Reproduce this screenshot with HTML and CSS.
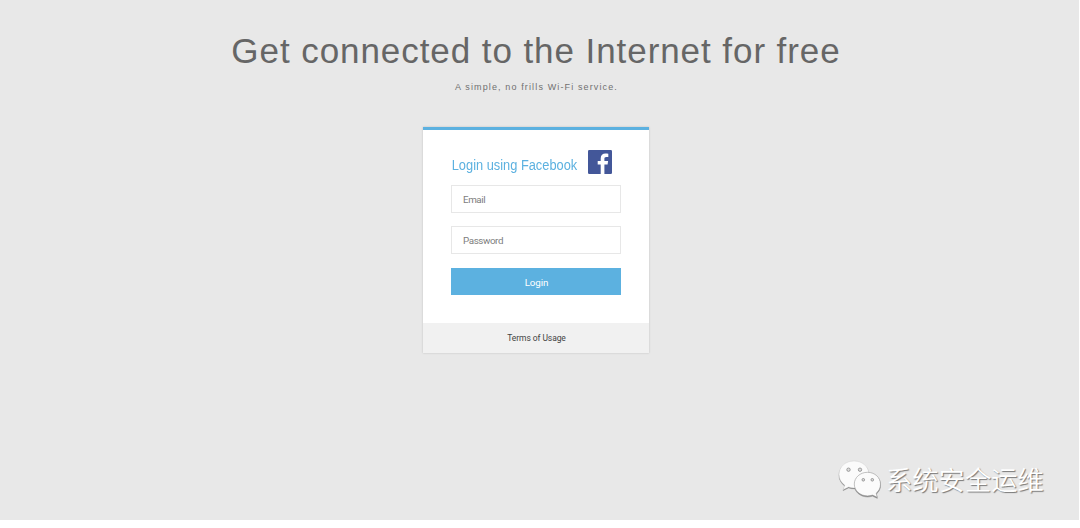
FILE: index.html
```html
<!DOCTYPE html>
<html lang="en">
<head>
<meta charset="utf-8">
<title>Get connected</title>
<link rel="stylesheet" href="styles.css">
</head>
<body>
<main class="page">
  <h1 class="title">Get connected to the Internet for free</h1>
  <p class="subtitle">A simple, no frills Wi-Fi service.</p>
  <section class="card">
    <form class="form">
      <div class="heading">
        <h2 class="heading-text">Login using Facebook</h2>
        <svg class="fb" viewBox="0 0 24 24" aria-hidden="true">
          <rect width="24" height="24" rx="1.2" fill="#435799"/>
          <path d="M12.700 24V14.600H9.700V11H12.700V8.400C12.700 5.200 14.600 3.500 17.500 3.500C18.800 3.500 19.900 3.600 20.300 3.700V7H18.300C16.800 7 16.400 7.700 16.400 8.800V11H20.100L19.600 14.600H16.400V24Z" fill="#fff"/>
        </svg>
      </div>
      <input class="field" type="text" placeholder="Email">
      <input class="field" type="password" placeholder="Password">
      <button class="submit" type="button">Login</button>
    </form>
    <footer class="terms">Terms of Usage</footer>
  </section>
  <div class="watermark">
    <svg class="wechat" viewBox="0 0 44 40" aria-hidden="true">
      <path d="M16 1C7.500 1 1 6.800 1 14.500C1 19 3.200 22.700 6.800 25.200L5 29.800L10.600 27C12.300 27.600 14 27.900 16 27.900C24.500 27.900 31 22 31 14.500C31 6.800 24.500 1 16 1Z" fill="#fbfbfb" stroke="#bbb" stroke-width=".3"/>
      <path d="M29.500 12.300C22.200 12.300 16.300 17.500 16.300 24.100C16.300 30.700 22.200 35.900 29.500 35.900C31.300 35.900 33 35.600 34.500 35.100L39.300 37.300L38.200 33.200C40.900 31.100 42.500 27.800 42.500 24.100C42.500 17.500 36.800 12.300 29.500 12.300Z" fill="#fbfbfb" stroke="#999" stroke-width=".6"/>
      <g fill="#ddd" stroke="#888" stroke-width=".8"><circle cx="10.500" cy="9.700" r="1.700"/><circle cx="22" cy="9.700" r="1.700"/><circle cx="25.300" cy="19.800" r="1.300"/><circle cx="34.300" cy="19.800" r="1.300"/></g>
    </svg>
    <span class="watermark-text" lang="zh-CN">系统安全运维</span>
  </div>
</main>
</body>
</html>
```
FILE: styles.css
```css
* { box-sizing: border-box; }
body { margin: 0; background: #fff; font-family: "Liberation Sans", Arial, sans-serif; }
.page {
  position: relative;
  display: flex;
  flex-direction: column;
  align-items: center;
  width: 1079px;
  height: 520px;
  padding: 31px 7px 0 0;
  background: #e8e8e8;
}
.title { margin: 0; font-size: 35px; line-height: 40px; font-weight: 400; letter-spacing: .93px; color: #666; white-space: nowrap; }
.subtitle { margin: 10px 0 0 1px; font-size: 9px; line-height: 12px; letter-spacing: 1.130px; color: #707070; }
.card {
  display: flex;
  flex-direction: column;
  width: 226px;
  height: 226px;
  margin-top: 34px;
  border-top: 3.500px solid #5cb1e0;
  background: #fff;
  box-shadow: 0 0 2px rgba(0, 0, 0, .18);
}
.form { display: flex; flex-direction: column; flex: 1; padding: 20px 28px 0; }
.heading { display: flex; height: 35px; }
.heading-text {
  width: 137px;
  margin: 7px 0 0;
  padding-left: .8px;
  font-size: 14px;
  line-height: 16px;
  font-weight: 400;
  color: #5cb1e0;
  white-space: nowrap;
  transform: scaleX(.916);
  transform-origin: left;
}
.fb { width: 24px; height: 24px; }
.field {
  width: 170px;
  height: 28px;
  margin: 0 0 13px;
  padding: 0 11px;
  border: 1px solid #e7e7e7;
  border-radius: 0;
  background: #fff;
  font: 9.800px Roboto, sans-serif;
  letter-spacing: -.4px;
}
.field::placeholder { color: #7d7d7d; opacity: 1; }
.submit { width: 170px; height: 27px; margin-top: 1px; padding: 2px 0 0 1px; border: 0; background: #5cb1e0; color: #fff; font: 9.800px Roboto, sans-serif; letter-spacing: -.1px; }
.terms { height: 30px; padding-left: 1px; background: #f1f1f1; color: #444; font: 8.500px/30px Roboto, sans-serif; letter-spacing: -.08px; text-align: center; }
.watermark { position: absolute; left: 838px; top: 460px; display: flex; }
.wechat { width: 44px; height: 40px; filter: drop-shadow(.5px 1px .5px #888); }
.watermark-text {
  margin-left: 4px;
  font: 350 26.300px/38px "Noto Sans CJK SC", sans-serif;
  color: #fff;
  text-shadow: 1px 1px 1px #777;
  white-space: nowrap;
}
```
